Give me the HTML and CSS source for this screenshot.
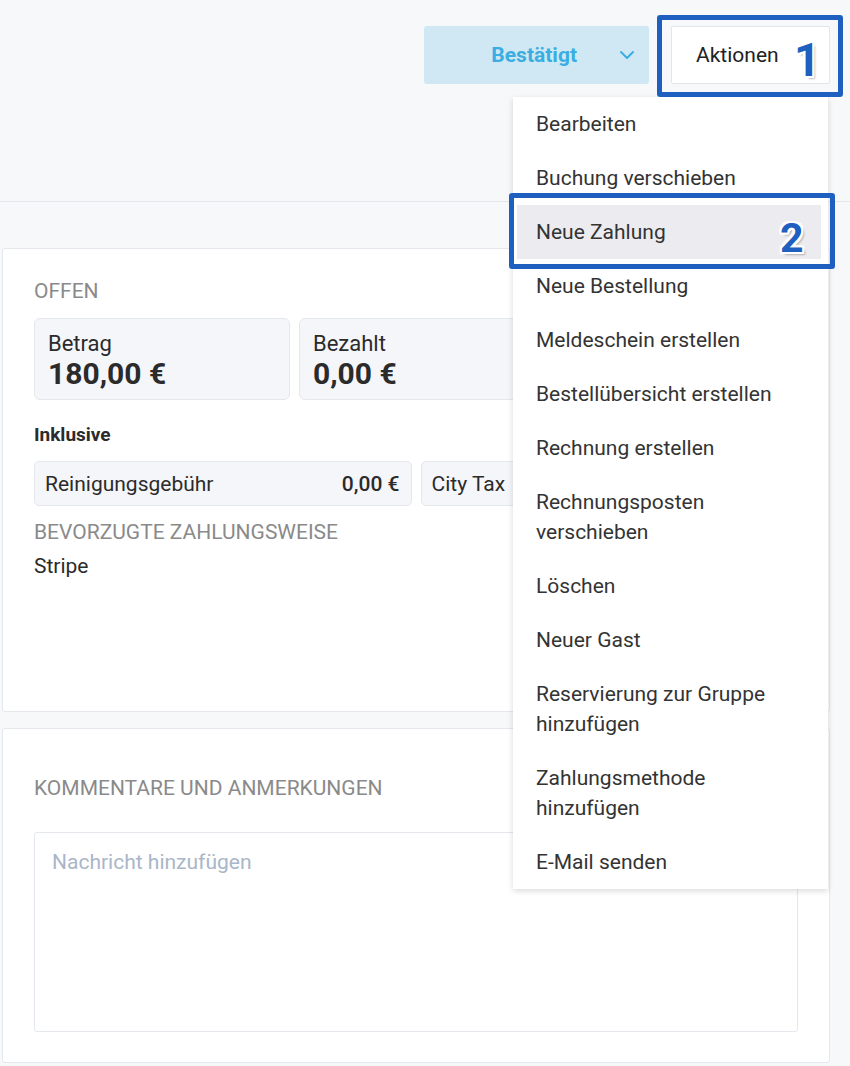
FILE: index.html
```html
<!DOCTYPE html>
<html lang="de">
<head>
    <meta charset="UTF-8">
    <meta name="viewport" content="width=device-width, initial-scale=1.0">
    <title>Reservierung</title>
    <link rel="stylesheet" href="styles.css">
</head>
<body>
    <div class="header">
        <div class="actions">
            <button class="status-btn">
                <span>Bestätigt</span>
                <svg class="chevron" width="16" height="10" viewBox="0 0 16 10"><path d="M2 2 L8 8 L14 2" fill="none" stroke="#3aaee3" stroke-width="2" stroke-linecap="round" stroke-linejoin="round"/></svg>
            </button>
            <button class="actions-btn">Aktionen</button>
        </div>
    </div>

    <!-- Callout 1 -->
    <div class="callout callout-1"></div>
    <span class="step step-1">1</span>

    <!-- Dropdown menu -->
    <ul class="menu">
        <li>Bearbeiten</li>
        <li>Buchung verschieben</li>
        <li class="active">Neue Zahlung</li>
        <li>Neue Bestellung</li>
        <li>Meldeschein erstellen</li>
        <li>Bestellübersicht erstellen</li>
        <li>Rechnung erstellen</li>
        <li>Rechnungsposten<br>verschieben</li>
        <li>Löschen</li>
        <li>Neuer Gast</li>
        <li>Reservierung zur Gruppe<br>hinzufügen</li>
        <li>Zahlungsmethode<br>hinzufügen</li>
        <li>E-Mail senden</li>
    </ul>

    <!-- Callout 2 -->
    <div class="callout callout-2"></div>
    <span class="step step-2">2</span>

    <div class="main">
        <div class="card card-open">
            <div class="label">Offen</div>
            <div class="amounts">
                <div class="amount">
                    <div class="amount-title">Betrag</div>
                    <div class="amount-value">180,00 €</div>
                </div>
                <div class="amount">
                    <div class="amount-title">Bezahlt</div>
                    <div class="amount-value">0,00 €</div>
                </div>
            </div>
            <div class="incl-title">Inklusive</div>
            <div class="fees">
                <div class="fee"><span>Reinigungsgebühr</span><strong>0,00 €</strong></div>
                <div class="fee"><span>City Tax</span></div>
            </div>
            <div class="label">Bevorzugte Zahlungsweise</div>
            <div class="method">Stripe</div>
        </div>

        <div class="card card-comments">
            <div class="label">Kommentare und Anmerkungen</div>
            <textarea class="message" placeholder="Nachricht hinzufügen"></textarea>
        </div>
    </div>
</body>
</html>
```

FILE: styles.css
```css
/* General */
body {
    margin: 0;
    padding: 0;
    font-family: "Roboto", "Liberation Sans", sans-serif;
    background: #f7f8fa;
    color: #2b2b2b;
    height: 1066px;
    overflow: hidden;
}

/* Header */
.header {
    height: 202px;
    border-bottom: 1px solid #e4e7ec;
    box-sizing: border-box;
}
.actions {
    display: flex;
    justify-content: flex-end;
    gap: 22px;
    padding: 26px 20px 0 0;
}
.status-btn {
    width: 225px;
    height: 58px;
    display: flex;
    align-items: center;
    justify-content: flex-end;
    gap: 42px;
    padding: 0 14px 0 0;
    background: #cfe8f4;
    border: none;
    border-radius: 3px;
    color: #3aaee3;
    font-family: inherit;
    font-size: 21px;
    font-weight: 700;
}
.actions-btn {
    width: 159px;
    height: 58px;
    padding: 0 0 0 24px;
    text-align: left;
    background: #fff;
    border: 1px solid #e3e6ea;
    border-radius: 2px;
    color: #222;
    font-family: inherit;
    font-size: 21px;
}

/* Callouts */
.callout {
    position: absolute;
    border: 5px solid #1f5fbf;
    border-radius: 3px;
    box-sizing: border-box;
    z-index: 3;
}
.callout-1 {
    left: 657px;
    top: 15px;
    width: 186px;
    height: 82px;
}
.callout-2 {
    left: 509px;
    top: 193px;
    width: 326px;
    height: 76px;
}
.step {
    position: absolute;
    z-index: 4;
    font-weight: 700;
    color: #1f5fbf;
    line-height: 1;
    text-shadow:
        2px 0 0 #fff, -2px 0 0 #fff, 0 2px 0 #fff, 0 -2px 0 #fff,
        2px 2px 0 #fff, -2px -2px 0 #fff, 2px -2px 0 #fff, -2px 2px 0 #fff,
        3px 3px 2px rgba(0, 0, 0, 0.25);
}
.step-1 {
    left: 794px;
    top: 37px;
    font-size: 46px;
}
.step-2 {
    left: 780px;
    top: 218px;
    font-size: 41px;
}

/* Dropdown menu */
.menu {
    position: absolute;
    left: 513px;
    top: 97px;
    width: 315px;
    margin: 0;
    padding: 0;
    list-style: none;
    background: #fff;
    box-shadow: 0 2px 6px rgba(0, 0, 0, 0.15);
    z-index: 2;
}
.menu li {
    padding: 12px 23px;
    font-size: 21px;
    line-height: 30px;
    color: #333;
}
.menu li.active {
    background: #ececf0;
    margin: 0 7px 0 4px;
    padding-left: 19px;
}

/* Main content */
.main {
    display: flex;
    flex-direction: column;
    gap: 16px;
    padding: 46px 20px 0 2px;
}
.card {
    background: #fff;
    border: 1px solid #e4e7ec;
    border-radius: 3px;
    box-sizing: border-box;
    padding: 0 31px;
}
.card-open {
    height: 464px;
    padding-top: 29px;
}
.card-comments {
    height: 335px;
    padding-top: 46px;
}
.label {
    font-size: 21px;
    line-height: 26px;
    color: #8a8a8a;
    text-transform: uppercase;
}

.amounts {
    display: grid;
    grid-template-columns: 256px 256px;
    gap: 9px;
    margin-top: 14px;
}
.amount {
    height: 82px;
    box-sizing: border-box;
    padding: 11px 13px 0;
    background: #f5f6fa;
    border: 1px solid #e4e7ec;
    border-radius: 6px;
}
.amount-title {
    font-size: 22px;
    line-height: 27px;
}
.amount-value {
    font-size: 30px;
    font-weight: 700;
    line-height: 34px;
}

.incl-title {
    margin-top: 23px;
    font-size: 19px;
    font-weight: 700;
    line-height: 24px;
}
.fees {
    display: grid;
    grid-template-columns: 1fr 1fr;
    gap: 9px;
    margin-top: 14px;
}
.fee {
    height: 45px;
    box-sizing: border-box;
    display: flex;
    align-items: center;
    justify-content: space-between;
    padding: 0 11px 0 10px;
    background: #f5f6fa;
    border: 1px solid #e4e7ec;
    border-radius: 5px;
    font-size: 21px;
}
.fee strong {
    font-weight: 500;
}
.fees + .label {
    margin-top: 13px;
}
.method {
    margin-top: 8px;
    font-size: 21px;
    line-height: 26px;
}

/* Comments */
.message {
    display: block;
    width: 100%;
    height: 200px;
    margin-top: 31px;
    box-sizing: border-box;
    padding: 17px 17px;
    border: 1px solid #e4e7ec;
    border-radius: 3px;
    font-family: inherit;
    font-size: 21px;
    resize: none;
}
.message::placeholder {
    color: #a9b6c8;
}
```
